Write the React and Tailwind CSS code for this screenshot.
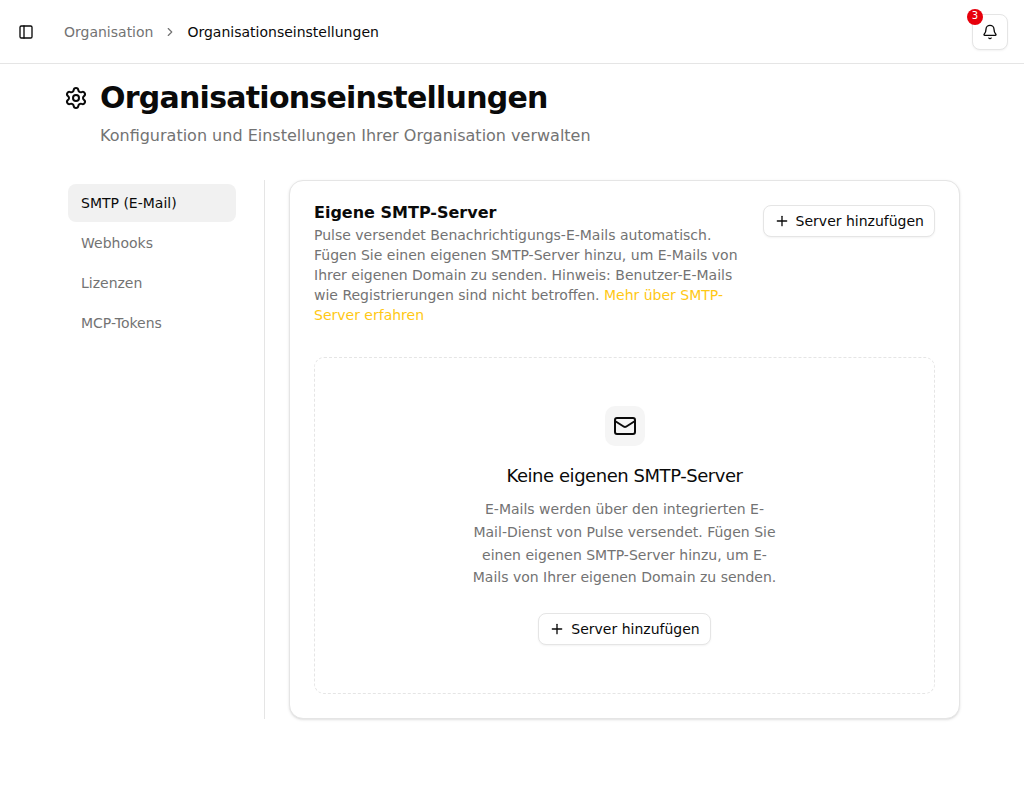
import { useState } from 'react';
import { Bell, ChevronRight, Mail, PanelLeft, Plus, Settings } from 'lucide-react';

const TABS = ['SMTP (E-Mail)', 'Webhooks', 'Lizenzen', 'MCP-Tokens'];

function AddServerButton() {
  return (
    <button
      type="button"
      className="inline-flex h-8 shrink-0 items-center justify-center gap-1.5 whitespace-nowrap rounded-lg border border-neutral-200 bg-white px-2.5 text-sm font-medium shadow-xs hover:bg-neutral-100"
    >
      <Plus size={16} />
      Server hinzufügen
    </button>
  );
}

function Header() {
  return (
    <header className="flex h-16 items-center border-b border-neutral-200 px-4">
      <button type="button" aria-label="Seitenleiste umschalten" className="flex h-7 w-5 items-center justify-center rounded-lg">
        <PanelLeft size={16} />
      </button>

      <nav aria-label="Breadcrumb" className="ml-7">
        <ol className="flex items-center gap-2.5 text-sm text-neutral-500">
          <li>
            <a href="#organisation" className="hover:text-neutral-950">Organisation</a>
          </li>
          <li aria-hidden="true">
            <ChevronRight size={14} />
          </li>
          <li aria-current="page" className="text-neutral-950">Organisationseinstellungen</li>
        </ol>
      </nav>

      {/* Notifications */}
      <button
        type="button"
        aria-label="Benachrichtigungen"
        className="relative ml-auto flex size-9 items-center justify-center rounded-lg border border-neutral-200 bg-white shadow-xs"
      >
        <Bell size={16} />
        <span className="absolute -left-1.5 -top-1.5 flex size-4 justify-center rounded-full bg-red-600 text-[10px] leading-3.5 text-white">
          3
        </span>
      </button>
    </header>
  );
}

function SettingsNav() {
  const [active, setActive] = useState(TABS[0]);

  return (
    <nav className="flex w-44 shrink-0 flex-col gap-0.5 p-1">
      {TABS.map(tab => (
        <button
          key={tab}
          type="button"
          onClick={() => setActive(tab)}
          className={`rounded-lg border border-transparent px-3 py-2 text-left text-sm font-medium ${
            tab === active ? 'bg-[#f1f1f1] text-neutral-950' : 'text-neutral-500 hover:text-neutral-950'
          }`}
        >
          {tab}
        </button>
      ))}
    </nav>
  );
}

function SmtpCard() {
  return (
    <section className="min-w-0 flex-1 rounded-[14px] border border-neutral-200 bg-white p-6 shadow-sm">
      <div className="flex items-start gap-4">
        <div className="min-w-0 flex-1 space-y-1">
          <h2 className="font-semibold leading-none">Eigene SMTP-Server</h2>
          <p className="text-sm text-neutral-500">
            Pulse versendet Benachrichtigungs-E-Mails automatisch. Fügen Sie einen eigenen SMTP-Server hinzu, um
            E-Mails von Ihrer eigenen Domain zu senden. Hinweis: Benutzer-E-Mails wie Registrierungen sind nicht
            betroffen.{' '}
            <a href="#smtp" className="text-[#ffc814] hover:underline">Mehr über SMTP-Server erfahren</a>
          </p>
        </div>
        <AddServerButton />
      </div>

      {/* Empty state */}
      <div className="mt-8 flex flex-col items-center rounded-[10px] border border-dashed border-neutral-200 p-12 text-center">
        <div className="flex size-10 items-center justify-center rounded-[10px] bg-neutral-100">
          <Mail size={24} />
        </div>
        <h3 className="mt-4 text-lg font-medium tracking-tight">Keine eigenen SMTP-Server</h3>
        <p className="mt-2 mb-6 max-w-sm text-balance text-sm leading-relaxed text-neutral-500">
          E-Mails werden über den integrierten E-Mail-Dienst von Pulse versendet. Fügen Sie einen eigenen
          SMTP-Server hinzu, um E-Mails von Ihrer eigenen Domain zu senden.
        </p>
        <AddServerButton />
      </div>
    </section>
  );
}

export default function App() {
  return (
    <div lang="de" className="min-h-screen bg-white font-['DejaVu_Sans',sans-serif] text-neutral-950">
      <Header />
      <main className="px-16 py-4">
        <div className="flex items-center gap-3">
          <Settings size={24} />
          <h1 className="text-3xl font-bold tracking-tight">Organisationseinstellungen</h1>
        </div>
        <p className="mt-2 pl-9 text-neutral-500">Konfiguration und Einstellungen Ihrer Organisation verwalten</p>

        <div className="mt-8 flex gap-6">
          <SettingsNav />
          <div className="w-px shrink-0 bg-neutral-200" />
          <SmtpCard />
        </div>
      </main>
    </div>
  );
}
